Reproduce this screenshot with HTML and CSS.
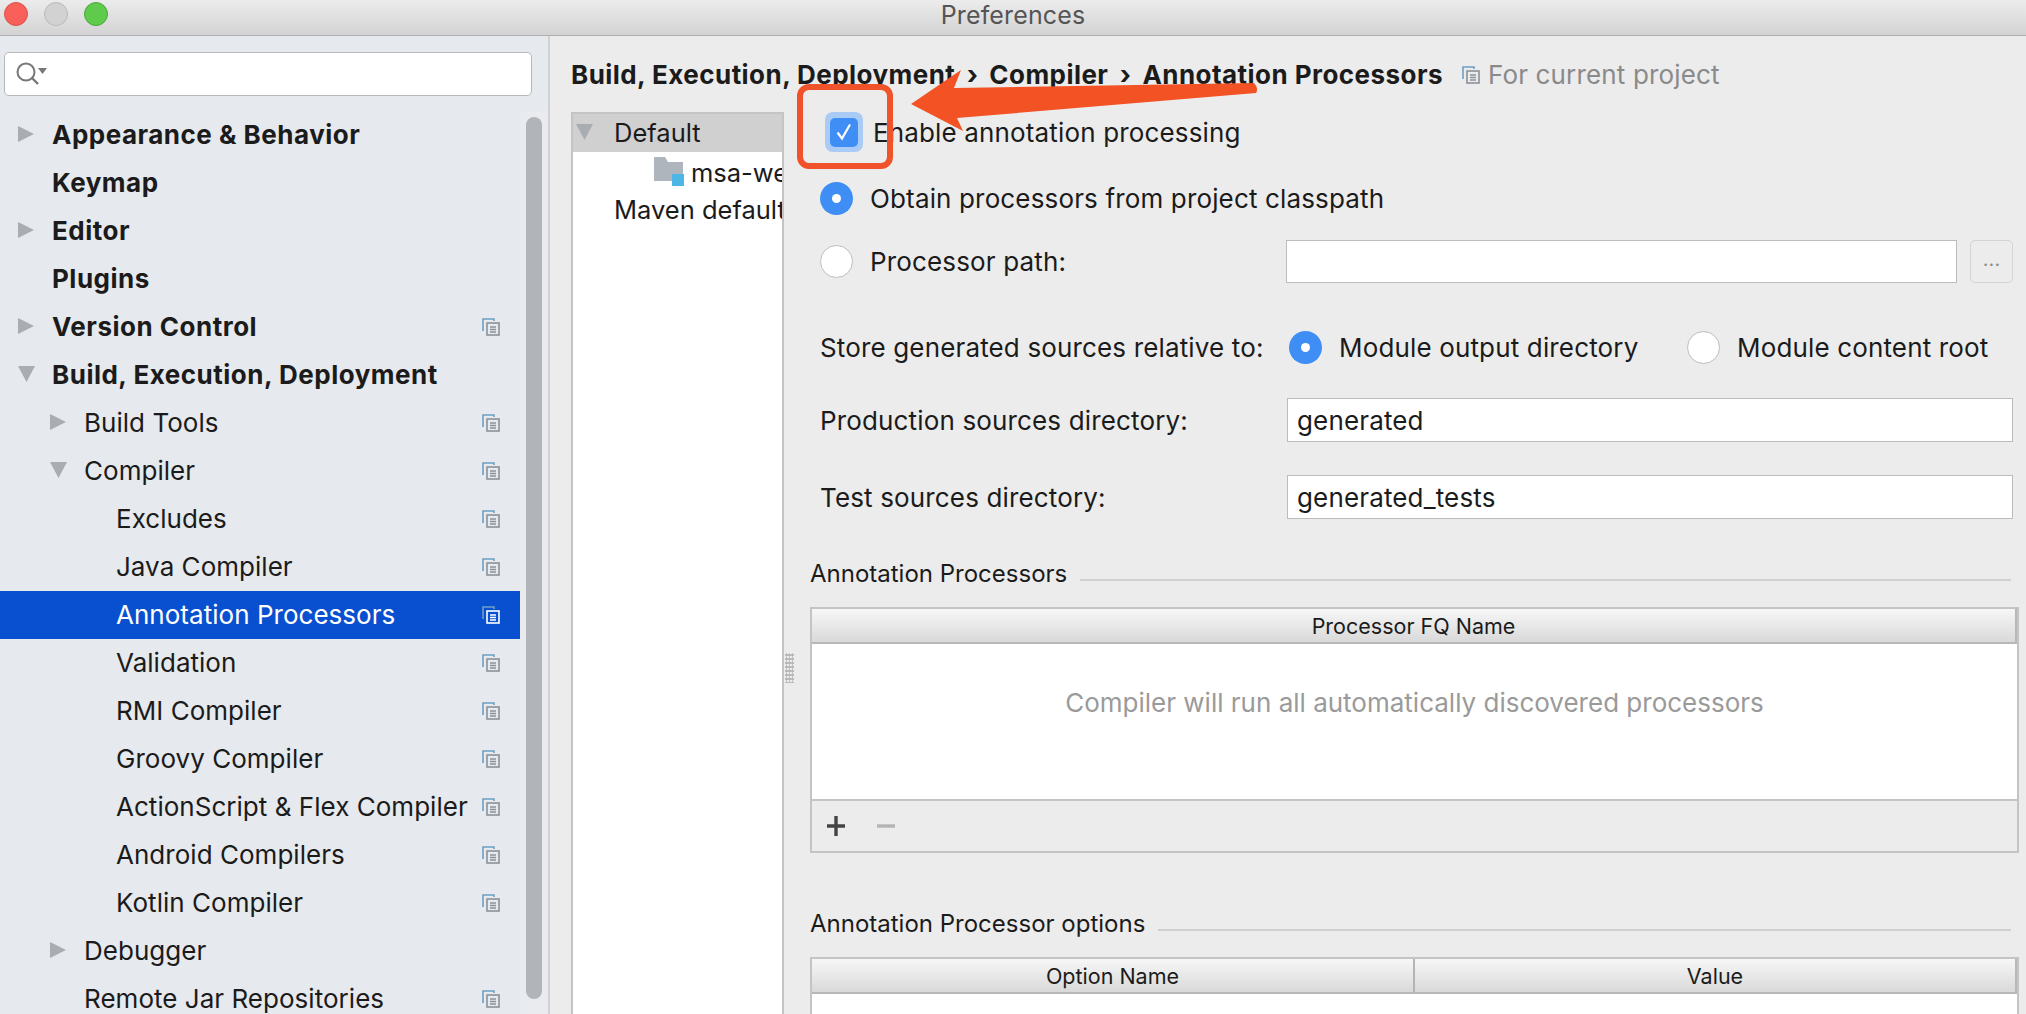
FILE: index.html
```html
<!DOCTYPE html>
<html lang="en">
<head>
    <meta charset="UTF-8">
    <title>Preferences</title>
    <link rel="stylesheet" href="styles.css">
</head>
<body>

<svg class="defs" width="0" height="0">
    <symbol id="copy" viewBox="0 0 18 18">
        <path d="M1 13V1h11v2" fill="none" stroke="#6f9fc4" stroke-width="1.6"/>
        <rect x="5" y="5" width="12" height="12" fill="none" stroke="currentColor" stroke-width="1.6"/>
        <path d="M8 9h6M8 11.5h6M8 14h6" stroke="currentColor" stroke-width="1.3"/>
    </symbol>
</svg>

<div class="titlebar">
    <div class="lights">
        <span class="light red"></span>
        <span class="light gray"></span>
        <span class="light green"></span>
    </div>
    <span class="title">Preferences</span>
</div>

<div class="window">
    <aside class="sidebar">
        <div class="search">
            <svg width="40" height="36" viewBox="0 0 40 36">
                <circle cx="15" cy="16" r="8.5" fill="none" stroke="#777" stroke-width="2"/>
                <path d="M21 22l6 6" stroke="#777" stroke-width="2.4"/>
                <path d="M27 12h9l-4.5 6z" fill="#777"/>
            </svg>
        </div>
        <div class="tree-wrap">
            <ul class="tree">
                <li class="row bold"><span class="arrow right"></span><span class="label">Appearance &amp; Behavior</span></li>
                <li class="row bold"><span class="arrow none"></span><span class="label">Keymap</span></li>
                <li class="row bold"><span class="arrow right"></span><span class="label">Editor</span></li>
                <li class="row bold"><span class="arrow none"></span><span class="label">Plugins</span></li>
                <li class="row bold"><span class="arrow right"></span><span class="label">Version Control</span><svg class="copy"><use href="#copy"/></svg></li>
                <li class="row bold"><span class="arrow down"></span><span class="label">Build, Execution, Deployment</span></li>
                <li class="row lvl1"><span class="arrow right"></span><span class="label">Build Tools</span><svg class="copy"><use href="#copy"/></svg></li>
                <li class="row lvl1"><span class="arrow down"></span><span class="label">Compiler</span><svg class="copy"><use href="#copy"/></svg></li>
                <li class="row lvl2"><span class="label">Excludes</span><svg class="copy"><use href="#copy"/></svg></li>
                <li class="row lvl2"><span class="label">Java Compiler</span><svg class="copy"><use href="#copy"/></svg></li>
                <li class="row lvl2 selected"><span class="label">Annotation Processors</span><svg class="copy"><use href="#copy"/></svg></li>
                <li class="row lvl2"><span class="label">Validation</span><svg class="copy"><use href="#copy"/></svg></li>
                <li class="row lvl2"><span class="label">RMI Compiler</span><svg class="copy"><use href="#copy"/></svg></li>
                <li class="row lvl2"><span class="label">Groovy Compiler</span><svg class="copy"><use href="#copy"/></svg></li>
                <li class="row lvl2"><span class="label">ActionScript &amp; Flex Compiler</span><svg class="copy"><use href="#copy"/></svg></li>
                <li class="row lvl2"><span class="label">Android Compilers</span><svg class="copy"><use href="#copy"/></svg></li>
                <li class="row lvl2"><span class="label">Kotlin Compiler</span><svg class="copy"><use href="#copy"/></svg></li>
                <li class="row lvl1"><span class="arrow right"></span><span class="label">Debugger</span></li>
                <li class="row lvl1"><span class="arrow none"></span><span class="label">Remote Jar Repositories</span><svg class="copy"><use href="#copy"/></svg></li>
            </ul>
            <div class="scrollbar"><div class="thumb"></div></div>
        </div>
    </aside>

    <main class="main">
        <div class="crumbs">
            <b>Build, Execution, Deployment</b><span class="sep">›</span><b>Compiler</b><span class="sep">›</span><b>Annotation Processors</b>
            <svg class="copy scope"><use href="#copy"/></svg>
            <span class="scope-text">For current project</span>
        </div>

        <div class="split">
            <div class="profiles">
                <div class="profile active"><span class="arrow down"></span>Default</div>
                <div class="profile module">
                    <svg class="folder" width="32" height="30" viewBox="0 0 32 30">
                        <path d="M0 0h11l3 5h15v19H0z" fill="#aeb5bd"/>
                        <rect x="18" y="17" width="12" height="12" fill="#4db6e4"/>
                    </svg>
                    msa-web
                </div>
                <div class="profile maven">Maven default annotation processors</div>
            </div>
            <div class="grip"><i></i></div>

            <div class="panel">
                <div class="opt check-row">
                    <span class="check-ring"><span class="check">
                        <svg width="20" height="20" viewBox="0 0 20 20"><path d="M3.5 10.5l4.5 6L16 2.5" fill="none" stroke="#fff" stroke-width="2.2"/></svg>
                    </span></span>
                    <span>Enable annotation processing</span>
                </div>
                <div class="opt radio-row classpath"><span class="radio on"></span><span>Obtain processors from project classpath</span></div>
                <div class="opt radio-row path">
                    <span class="radio"></span><span class="path-label">Processor path:</span>
                    <div class="input grow"></div>
                    <div class="browse">...</div>
                </div>
                <div class="opt store">
                    <span class="field-label">Store generated sources relative to:</span>
                    <span class="radio on"></span><span class="store-a">Module output directory</span>
                    <span class="radio"></span><span class="store-b">Module content root</span>
                </div>
                <div class="opt field prod"><span class="field-label">Production sources directory:</span><div class="input grow">generated</div></div>
                <div class="opt field tests"><span class="field-label">Test sources directory:</span><div class="input grow">generated_tests</div></div>

                <div class="section first"><span>Annotation Processors</span><i></i></div>
                <div class="table">
                    <div class="thead"><div class="th">Processor FQ Name</div></div>
                    <div class="empty">Compiler will run all automatically discovered processors</div>
                    <div class="tools">
                        <svg width="18" height="20" viewBox="0 0 18 20"><path d="M9 0v20M0 10h18" stroke="#444" stroke-width="3.4"/></svg>
                        <svg width="18" height="20" viewBox="0 0 18 20"><path d="M0 10h18" stroke="#b4b4b4" stroke-width="3.4"/></svg>
                    </div>
                </div>

                <div class="section second"><span>Annotation Processor options</span><i></i></div>
                <div class="table options">
                    <div class="thead"><div class="th name">Option Name</div><div class="th">Value</div></div>
                    <div class="rest"></div>
                </div>
            </div>
        </div>
    </main>
</div>

<!-- annotation drawn on top of the screenshot -->
<svg class="markup" width="2026" height="1014" viewBox="0 0 2026 1014">
    <path d="M911 104L961 70L954 88L1254 83Q1259 88 1256 93L957 118L963 131Z" fill="#f25224"/>
    <rect x="800" y="87" width="90" height="79" rx="9" fill="none" stroke="#f0522a" stroke-width="6"/>
</svg>

</body>
</html>
```
FILE: styles.css
```css
:root {
    --sidebar-bg: #e6e9ed;
    --panel-bg: #ececec;
    --border: #c4c4c4;
    --blue: #3f8ef5;
    --text: #1b1b1b;
}

* {
    box-sizing: border-box;
}

html, body {
    margin: 0;
    height: 1014px;
    overflow: hidden;
}

body {
    position: relative;
    font-family: Inter, "Noto Sans", sans-serif;
    font-size: 26px;
    letter-spacing: 0.15px;
    color: var(--text);
    background: var(--panel-bg);
}

.defs {
    position: absolute;
}

/* Title bar */
.titlebar {
    display: flex;
    align-items: center;
    justify-content: center;
    position: relative;
    height: 36px;
    background: linear-gradient(#ececec, #d3d3d3);
    border-bottom: 1px solid #adadad;
}

.title {
    color: #555;
    font-size: 25px;
    margin-top: -6px;
}

.lights {
    position: absolute;
    left: 4px;
    top: 2px;
    display: flex;
    gap: 16px;
}

.light {
    width: 24px;
    height: 24px;
    border-radius: 50%;
}

.red { background: #f9605a; border: 1px solid #d9534e; }
.gray { background: #d2d2d2; border: 1px solid #b9b9b9; }
.green { background: #5fcb4c; border: 1px solid #4aa63a; }

.window {
    display: flex;
    height: 978px;
    overflow: hidden;
}

/* Left tree */
.sidebar {
    width: 550px;
    flex: none;
    background: var(--sidebar-bg);
    border-right: 2px solid #d2d2d2;
    padding-top: 16px;
}

.search {
    display: flex;
    align-items: center;
    width: 528px;
    height: 44px;
    margin-left: 4px;
    padding-left: 6px;
    background: #fff;
    border: 1px solid #b8b8b8;
    border-radius: 5px;
}

.tree-wrap {
    display: flex;
    margin-top: 15px;
    height: 903px;
    overflow: hidden;
}

.tree {
    list-style: none;
    margin: 0;
    padding: 0;
    width: 520px;
    flex: none;
    letter-spacing: 0.03px;
}

.row {
    display: flex;
    align-items: center;
    height: 48px;
    padding-left: 18px;
    padding-bottom: 2px;
}

.row .label {
    flex: 1;
    white-space: nowrap;
}

.row.bold {
    font-weight: 700;
    letter-spacing: 0.5px;
}

.row.lvl1 { padding-left: 50px; }
.row.lvl2 { padding-left: 116px; }

.row.selected {
    background: #0850cf;
    color: #fff;
}

.arrow {
    flex: none;
    display: inline-block;
    width: 34px;
    height: 16px;
}

.arrow.right {
    background: #a9adb2;
    clip-path: polygon(0 0, 16px 50%, 0 100%);
}

.arrow.down {
    background: #a9adb2;
    clip-path: polygon(0 0, 17px 0, 8.5px 100%);
}

.copy {
    width: 18px;
    height: 18px;
    flex: none;
    margin: 2px 20px 0 0;
    color: #8b9299;
}

.selected .copy {
    color: #fff;
}

.scrollbar {
    width: 28px;
    flex: none;
    padding: 6px 6px 0;
    background: #e9ebee;
}

.thumb {
    width: 16px;
    height: 882px;
    border-radius: 8px;
    background: #b1b5b9;
}

/* Right side */
.main {
    flex: 1;
    min-width: 0;
}

.crumbs {
    display: flex;
    align-items: center;
    height: 76px;
    padding: 1px 0 0 21px;
    white-space: nowrap;
}

.crumbs b {
    letter-spacing: 0.45px;
}

.sep {
    width: 34px;
    text-align: center;
    font-weight: 700;
}

.copy.scope {
    margin: 0 8px 0 19px;
}

.scope-text {
    color: #8a8a8a;
}

.split {
    display: flex;
    height: 902px;
    padding-left: 21px;
}

.profiles {
    width: 213px;
    flex: none;
    overflow: hidden;
    white-space: nowrap;
    letter-spacing: 0;
    font-size: 25.5px;
    background: #fff;
    border: 2px solid var(--border);
    border-bottom: 0;
}

.profile {
    display: flex;
    align-items: center;
    height: 34px;
    padding-left: 41px;
}

.profile.active {
    height: 38px;
    padding-left: 3px;
    padding-bottom: 2px;
    background: #d0d0d0;
}

.profile.active .arrow {
    width: 38px;
}

.profile.module {
    height: 40px;
    padding-left: 81px;
}

.folder {
    flex: none;
    margin-right: 5px;
}

.grip {
    width: 13px;
    flex: none;
    padding: 541px 0 0 1px;
}

.grip i {
    display: block;
    width: 9px;
    height: 30px;
    background: radial-gradient(#b4b4b4 1px, transparent 1.5px) 0 0 / 3px 4px;
}

.panel {
    flex: 1;
    min-width: 0;
    padding-left: 13px;
    padding-right: 7px;
    white-space: nowrap;
}

.opt {
    display: flex;
    align-items: center;
    padding-left: 10px;
}

.check-row {
    height: 40px;
    padding-left: 15px;
}

.check-ring {
    display: flex;
    align-items: center;
    justify-content: center;
    width: 38px;
    height: 40px;
    margin-right: 10px;
    background: #a9cbf6;
    border-radius: 8px;
}

.check {
    display: flex;
    align-items: center;
    justify-content: center;
    width: 28px;
    height: 29px;
    background: var(--blue);
    border-radius: 5px;
}

.radio {
    flex: none;
    width: 33px;
    height: 33px;
    border-radius: 50%;
    background: #fff;
    border: 1px solid #bdbdbd;
}

.radio.on {
    background: var(--blue);
    border: 0;
    position: relative;
}

.radio.on::after {
    content: "";
    position: absolute;
    left: 12px;
    top: 12px;
    width: 9px;
    height: 9px;
    border-radius: 50%;
    background: #fff;
}

.radio-row .radio {
    margin-right: 17px;
}

.radio-row.classpath {
    height: 40px;
    margin-top: 26px;
}

.radio-row.path {
    height: 43px;
    margin-top: 22px;
    padding-right: 6px;
}

.path-label {
    width: 416px;
    flex: none;
}

.input {
    height: 100%;
    display: flex;
    align-items: center;
    padding-left: 9px;
    background: #fff;
    border: 1px solid #bcbcbc;
}

.grow {
    flex: 1;
}

.browse {
    width: 43px;
    height: 43px;
    flex: none;
    margin-left: 13px;
    padding-top: 6px;
    text-align: center;
    color: #8c8c8c;
    font-size: 20px;
    border: 1px solid #d4d4d4;
    border-radius: 5px;
}

.field-label {
    width: 467px;
    flex: none;
}

.store {
    height: 40px;
    margin-top: 44px;
}

.store .field-label {
    width: 469px;
}

.store-a {
    width: 365px;
    flex: none;
    padding-left: 17px;
}

.store-b {
    padding-left: 17px;
}

.field {
    height: 44px;
    padding-right: 6px;
}

.prod { margin-top: 31px; }
.tests { margin-top: 33px; }

.section {
    display: flex;
    align-items: center;
    height: 30px;
    font-size: 24px;
    letter-spacing: 0;
    padding-right: 8px;
}

.section i {
    flex: 1;
    height: 2px;
    margin: 14px 0 0 13px;
    background: #d0d0d0;
}

.section.first { margin-top: 39px; }
.section.second { margin-top: 55px; }

.table {
    margin-top: 19px;
    background: var(--panel-bg);
    border: 2px solid var(--border);
}

.table.options {
    border-bottom: 0;
    height: 57px;
    overflow: hidden;
}

.thead {
    display: flex;
    height: 35px;
    font-size: 21.5px;
    letter-spacing: 0;
    background: linear-gradient(#f7f7f7, #d9d9d9);
    border-bottom: 2px solid #b8b8b8;
    border-right: 2px solid #b8b8b8;
}

.th {
    flex: 1;
    display: flex;
    align-items: center;
    justify-content: center;
}

.th.name {
    flex: none;
    width: 603px;
    border-right: 2px solid #b4b4b4;
}

.empty {
    display: flex;
    align-items: center;
    justify-content: center;
    height: 157px;
    padding-bottom: 38px;
    letter-spacing: 0;
    color: #9a9a9a;
    background: #fff;
    border-bottom: 2px solid var(--border);
}

.tools {
    display: flex;
    align-items: center;
    gap: 32px;
    height: 50px;
    padding-left: 15px;
}

.rest {
    height: 100%;
    background: #fff;
}

/* Annotation overlay */
.markup {
    position: absolute;
    left: 0;
    top: 0;
    pointer-events: none;
}
```
